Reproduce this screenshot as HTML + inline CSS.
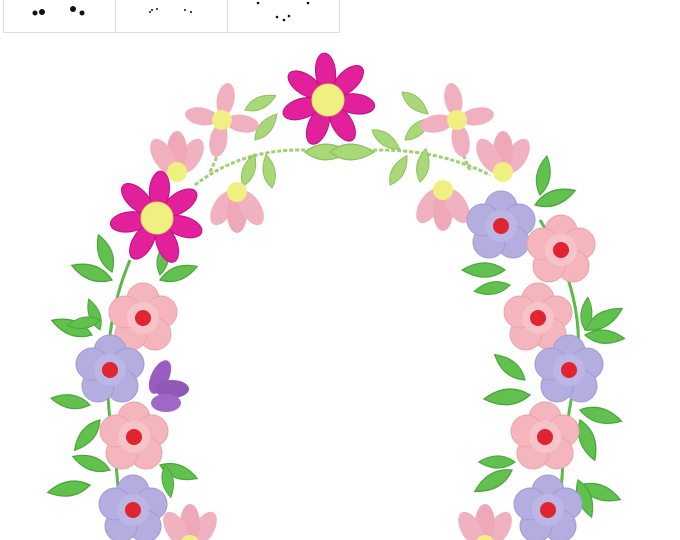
<!DOCTYPE html><html><head><style>
html,body{margin:0;padding:0;background:#fff;width:680px;height:540px;overflow:hidden}
.box{position:absolute;top:-1px;height:32px;width:111px;border:1px solid #ddd;background:#fff}
</style></head><body>
<div class="box" style="left:3px"></div><div class="box" style="left:115px"></div><div class="box" style="left:227px"></div>
<svg width="680" height="540" style="position:absolute;left:0;top:0">
<defs>
<g id="lf"><path d="M0,0 Q15,-11 33,0 Q15,11 0,0Z" fill="#62c04e" stroke="#4aa83a" stroke-width="1"/></g>
<g id="gl"><path d="M0,0 Q15,-12 34,0 Q15,12 0,0Z" fill="#a8d878" stroke="#90c060" stroke-width="1"/></g>
<g id="pk"><g fill="#f4b6bc" stroke="#eaa2aa"><circle cx="0" cy="-19" r="16"/><circle cx="18" cy="-6" r="16"/><circle cx="12" cy="16" r="16"/><circle cx="-12" cy="16" r="16"/><circle cx="-18" cy="-6" r="16"/></g><circle r="16" fill="#f6c4c8"/><circle r="8" fill="#e02430"/></g>
<g id="lv"><g fill="#b4aee0" stroke="#a09ad4"><circle cx="0" cy="-19" r="16"/><circle cx="18" cy="-6" r="16"/><circle cx="12" cy="16" r="16"/><circle cx="-12" cy="16" r="16"/><circle cx="-18" cy="-6" r="16"/></g><circle r="16" fill="#bcb6e4"/><circle r="8" fill="#e02430"/></g>
<g id="pt"><ellipse cx="0" cy="-28" rx="10" ry="19" fill="#e2209c" stroke="#c01080"/></g>
<g id="mg"><use href="#pt"/><use href="#pt" transform="rotate(51)"/><use href="#pt" transform="rotate(103)"/><use href="#pt" transform="rotate(154)"/><use href="#pt" transform="rotate(206)"/><use href="#pt" transform="rotate(257)"/><use href="#pt" transform="rotate(309)"/><circle r="16" fill="#f0f080" stroke="#e0e060"/></g>
<g id="sp"><ellipse cx="0" cy="-19" rx="8" ry="15" fill="#f0b0c0"/><ellipse cx="0" cy="-19" rx="8" ry="15" fill="#f0b0c0" transform="rotate(90)"/><ellipse cx="0" cy="-19" rx="8" ry="15" fill="#f0b0c0" transform="rotate(180)"/><ellipse cx="0" cy="-19" rx="8" ry="15" fill="#f0b0c0" transform="rotate(270)"/><circle r="9" fill="#f0f080"/></g>
<g id="bd"><ellipse cx="-14" cy="16" rx="10" ry="19" fill="#f0b2c0" transform="rotate(30 -14 16)"/><ellipse cx="0" cy="21" rx="10" ry="20" fill="#eea8b8"/><ellipse cx="14" cy="16" rx="10" ry="19" fill="#f0b2c0" transform="rotate(-30 14 16)"/><circle r="10" fill="#f0f080"/></g>
</defs>
<g fill="none" stroke="#a0d070" stroke-width="3" stroke-dasharray="4 2">
<path d="M195,185 Q240,150 300,150 Q340,150 380,150 Q440,150 490,175"/>
<path d="M210,172 Q230,130 225,118"/><path d="M470,170 Q455,140 457,118"/>
</g>
<g fill="none" stroke="#5cb848" stroke-width="3"><path d="M130,260 Q100,330 110,420 Q120,480 120,540"/><path d="M540,220 Q590,300 575,380 Q560,450 560,540"/></g>
<use href="#gl" transform="translate(245,110) rotate(-25)"/><use href="#gl" transform="translate(255,140) rotate(-50)"/><use href="#gl" transform="translate(243,186) rotate(-70)"/><use href="#gl" transform="translate(272,188) rotate(-100)"/><use href="#gl" transform="translate(305,152) scale(1.3)"/><use href="#gl" transform="translate(330,152) scale(1.3)"/><use href="#gl" transform="translate(372,130) rotate(35)"/><use href="#gl" transform="translate(402,92) rotate(40)"/><use href="#gl" transform="translate(390,185) rotate(-60)"/><use href="#gl" transform="translate(420,182) rotate(-80)"/><use href="#gl" transform="translate(405,140) rotate(-40)"/>
<use href="#lf" transform="translate(112,272) rotate(-110) scale(1.2)"/><use href="#lf" transform="translate(112,280) rotate(-160) scale(1.3)"/><use href="#lf" transform="translate(92,335) rotate(-160) scale(1.3)"/><use href="#lf" transform="translate(100,330) rotate(-110)"/><use href="#lf" transform="translate(100,320) rotate(170)"/><use href="#lf" transform="translate(160,280) rotate(-20) scale(1.2)"/><use href="#lf" transform="translate(160,275) rotate(-80)"/><use href="#lf" transform="translate(90,405) rotate(-170) scale(1.2)"/><use href="#lf" transform="translate(100,420) rotate(130) scale(1.2)"/><use href="#lf" transform="translate(110,470) rotate(-160) scale(1.2)"/><use href="#lf" transform="translate(90,485) rotate(170) scale(1.3)"/><use href="#lf" transform="translate(160,465) rotate(20) scale(1.2)"/><use href="#lf" transform="translate(165,465) rotate(80)"/>
<use href="#lf" transform="translate(540,195) rotate(-80) scale(1.2)"/><use href="#lf" transform="translate(535,205) rotate(-20) scale(1.3)"/><use href="#lf" transform="translate(505,270) rotate(180) scale(1.3)"/><use href="#lf" transform="translate(510,285) rotate(170) scale(1.1)"/><use href="#lf" transform="translate(585,330) rotate(-30) scale(1.3)"/><use href="#lf" transform="translate(585,330) rotate(-85)"/><use href="#lf" transform="translate(585,335) rotate(5) scale(1.2)"/><use href="#lf" transform="translate(525,380) rotate(-140) scale(1.2)"/><use href="#lf" transform="translate(530,395) rotate(175) scale(1.4)"/><use href="#lf" transform="translate(580,410) rotate(15) scale(1.3)"/><use href="#lf" transform="translate(580,420) rotate(70) scale(1.3)"/><use href="#lf" transform="translate(515,462) rotate(180) scale(1.1)"/><use href="#lf" transform="translate(512,470) rotate(150) scale(1.3)"/><use href="#lf" transform="translate(580,485) rotate(20) scale(1.3)"/><use href="#lf" transform="translate(578,480) rotate(70) scale(1.2)"/>
<use href="#sp" transform="translate(222,120) rotate(10) scale(1.1)"/><use href="#sp" transform="translate(457,120) rotate(-10) scale(1.1)"/>
<use href="#bd" transform="translate(177,172) rotate(180)"/><use href="#bd" transform="translate(503,172) rotate(180)"/>
<use href="#bd" transform="translate(237,192)"/><use href="#bd" transform="translate(443,190)"/>
<use href="#bd" transform="translate(190,545) rotate(180)"/><use href="#bd" transform="translate(485,545) rotate(180)"/>
<g transform="translate(150,385)"><ellipse cx="10" cy="-8" rx="9" ry="18" fill="#9a5cc0" transform="rotate(25 10 -8)"/><ellipse cx="22" cy="4" rx="17" ry="9" fill="#9058b8"/><ellipse cx="16" cy="18" rx="15" ry="9" fill="#a066c8"/></g>
<use href="#mg" transform="translate(328,100) rotate(-5)"/><use href="#mg" transform="translate(157,218) rotate(5)"/>
<use href="#lv" transform="translate(501,226)"/><use href="#pk" transform="translate(561,250)"/>
<use href="#pk" transform="translate(538,318)"/><use href="#lv" transform="translate(569,370)"/>
<use href="#pk" transform="translate(545,437)"/><use href="#lv" transform="translate(548,510)"/>
<use href="#pk" transform="translate(143,318)"/><use href="#lv" transform="translate(110,370)"/>
<use href="#pk" transform="translate(134,437)"/><use href="#lv" transform="translate(133,510)"/>
<g fill="#111"><circle cx="42" cy="12" r="3"/><circle cx="35" cy="13" r="2.5"/><circle cx="73" cy="9" r="3"/><circle cx="82" cy="13" r="2.5"/><circle cx="152" cy="10" r="1"/><circle cx="157" cy="9" r="1"/><circle cx="150" cy="12" r="1"/><circle cx="185" cy="10" r="1"/><circle cx="191" cy="12" r="1"/><circle cx="258" cy="3" r="1.3"/><circle cx="308" cy="3" r="1.3"/><circle cx="277" cy="17" r="1.3"/><circle cx="284" cy="20" r="1.3"/><circle cx="289" cy="16" r="1.3"/></g>
</svg>
</body></html>
